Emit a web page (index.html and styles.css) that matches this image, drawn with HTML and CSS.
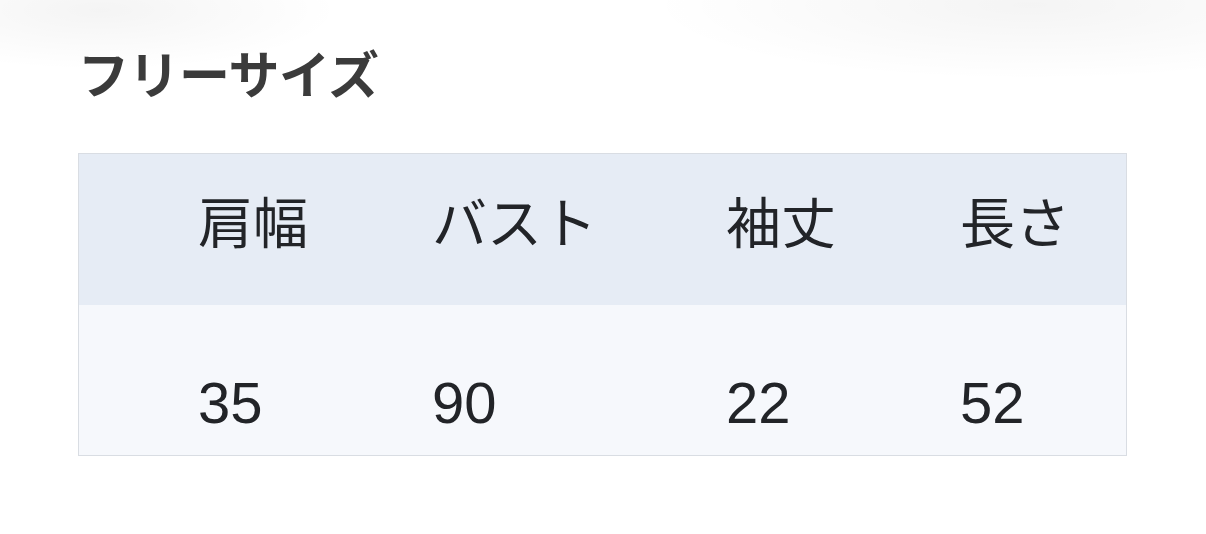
FILE: index.html
```html
<!DOCTYPE html>
<html lang="ja">
<head>
<meta charset="utf-8">
<link rel="stylesheet" href="styles.css">
</head>
<body>
<div class="page">
  <h1 class="title">フリーサイズ</h1>
  <div class="table">
    <div class="row head">
      <div class="cell">肩幅</div>
      <div class="cell">バスト</div>
      <div class="cell">袖丈</div>
      <div class="cell">長さ</div>
    </div>
    <div class="row body">
      <div class="cell num">35</div>
      <div class="cell num">90</div>
      <div class="cell num">22</div>
      <div class="cell num">52</div>
    </div>
  </div>
</div>
</body>
</html>
```

FILE: styles.css
```css
html, body {
  margin: 0;
  padding: 0;
}
body {
  width: 1206px;
  height: 534px;
  overflow: hidden;
  background:
    radial-gradient(ellipse 240px 60px at 100px 10px, rgba(0,0,0,0.045), rgba(0,0,0,0) 100%),
    radial-gradient(ellipse 380px 75px at 1030px 5px, rgba(0,0,0,0.045), rgba(0,0,0,0) 100%),
    #ffffff;
  font-family: "Noto Sans CJK JP", "Noto Sans", sans-serif;
}
.page {
  padding: 40px 0 0 78px;
}
.title {
  margin: 0 0 49px 0;
  font-size: 51px;
  line-height: 64px;
  font-weight: 700;
  color: #3b3b3b;
  letter-spacing: -0.5px;
}
.table {
  width: 1047px;
  border: 1px solid #d9dde3;
}
.row {
  display: grid;
  grid-template-columns: 234px 294px 234px 1fr;
  padding-left: 119px;
  align-items: center;
}
.head {
  height: 151px;
  background: #e6ecf5;
}
.body {
  height: 150px;
  background: #f6f8fc;
}
.cell {
  font-size: 55px;
  color: #222428;
  line-height: 1;
}
.head .cell {
  margin-top: -20px;
}
.num {
  font-family: "Liberation Sans", Arial, sans-serif;
  font-size: 58px;
  margin-top: 45px;
}
```
